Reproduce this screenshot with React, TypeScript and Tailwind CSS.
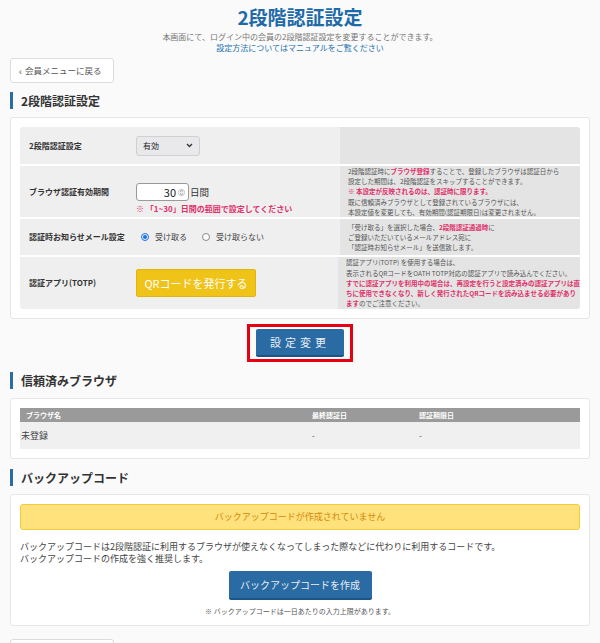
import React from 'react';

const font = { fontFamily: '"Noto Sans CJK JP", "Noto Sans", sans-serif' };

function SectionHeading({ title }: { title: string }) {
  return (
    <div className="flex items-center h-[17px]">
      <div className="w-[3px] h-[17px] bg-[#2a6da5]" />
      <h2 className="ml-[8px] text-[12px] leading-[17px] font-bold text-[#333]">{title}</h2>
    </div>
  );
}

function BackButton() {
  return (
    <div className="flex items-center w-[104px] h-[25px] bg-white border border-[#dcdcdc] rounded-[3px] px-[8px] text-[8.5px] text-[#555] whitespace-nowrap">
      <span className="mr-[3px] text-[10px] leading-none">‹</span>会員メニューに戻る
    </div>
  );
}

function Red({ children }: { children: React.ReactNode }) {
  return <span className="text-[#e0306a] font-bold">{children}</span>;
}

export default function App() {
  return (
    <div style={font} className="w-full min-h-[643px] bg-[#fafafa] px-[10px] pt-[5px] text-[#333]">
      <h1 className="text-center text-[19px] leading-[24px] font-bold text-[#1e6aa8]">2段階認証設定</h1>
      <p className="mt-[2px] text-center text-[8px] leading-[11px] text-[#777]">本画面にて、ログイン中の会員の2段階認証設定を変更することができます。</p>
      <p className="text-center text-[8px] leading-[11px] text-[#2370ae]">設定方法についてはマニュアルをご覧ください</p>

      <div className="mt-[5px]">
        <BackButton />
      </div>

      <div className="mt-[9px]">
        <SectionHeading title="2段階認証設定" />
      </div>

      <div className="mt-[8px] bg-white border border-[#e6e6e6] rounded-[3px] p-[9px]">
        <div className="flex flex-col gap-[2px] rounded-[3px] overflow-hidden">
          <div className="flex h-[37px]">
            <div className="w-[320px] bg-[#efefef] flex items-center">
              <div className="w-[116px] pl-[9px] text-[8px] font-bold text-[#333]">2段階認証設定</div>
              <div className="flex items-center justify-between w-[64px] h-[20px] bg-[#e9e9ec] border border-[#cfcfd4] rounded-[3px] px-[6px] text-[8px] text-[#222]">
                <span>有効</span>
                <svg width="7" height="5" viewBox="0 0 7 5"><path d="M1 1l2.5 2.5L6 1" stroke="#333" strokeWidth="1.3" fill="none" /></svg>
              </div>
            </div>
            <div className="flex-1 bg-[#e4e4e4]" />
          </div>

          <div className="flex h-[51px]">
            <div className="w-[320px] bg-[#efefef] flex">
              <div className="w-[116px] pl-[9px] flex items-center text-[8px] font-bold text-[#333]">ブラウザ認証有効期間</div>
              <div className="pt-[17px]">
                <div className="flex items-center">
                  <div className="flex items-center justify-end w-[53px] h-[18px] bg-white border border-[#9a9a9a] rounded-[3px] pr-[3px]">
                    <span className="text-[11px] leading-none text-[#222]">30</span>
                    <svg className="ml-[2px]" width="7" height="11" viewBox="0 0 7 11">
                      <circle cx="3.5" cy="5.5" r="3.3" fill="#f0f0f0" stroke="#bbb" strokeWidth="0.6" />
                      <path d="M2 4.6l1.5-1.4L5 4.6M2 6.4l1.5 1.4L5 6.4" stroke="#777" strokeWidth="0.7" fill="none" />
                    </svg>
                  </div>
                  <span className="ml-[1px] text-[9.5px] text-[#333]">日間</span>
                </div>
                <div className="mt-[3px] text-[8px] leading-[10px] font-bold text-[#e0306a]">※ 「1~30」日間の範囲で設定してください</div>
              </div>
            </div>
            <div className="flex-1 bg-[#e4e4e4] flex flex-col justify-center pl-[8px] text-[6.5px] leading-[10.2px] text-[#555] whitespace-nowrap">
              <div>2段階認証時に<Red>ブラウザ登録</Red>することで、登録したブラウザは認証日から</div>
              <div>設定した期間は、2段階認証をスキップすることができます。</div>
              <div><Red>※ 本設定が反映されるのは、認証時に限ります。</Red></div>
              <div>既に信頼済みブラウザとして登録されているブラウザには、</div>
              <div>本設定値を変更しても、有効期間(認証期限日)は変更されません。</div>
            </div>
          </div>

          <div className="flex h-[36px]">
            <div className="w-[320px] bg-[#efefef] flex items-center">
              <div className="w-[116px] pl-[9px] text-[8px] font-bold text-[#333]">認証時お知らせメール設定</div>
              <div className="flex items-center text-[8px] text-[#444]">
                <span className="ml-[5px] w-[8px] h-[8px] rounded-full border-[1.5px] border-[#1a73e8] flex items-center justify-center">
                  <span className="w-[3.5px] h-[3.5px] rounded-full bg-[#1a73e8]" />
                </span>
                <span className="ml-[6px]">受け取る</span>
                <span className="ml-[15px] w-[8px] h-[8px] rounded-full border border-[#888] bg-white" />
                <span className="ml-[6px]">受け取らない</span>
              </div>
            </div>
            <div className="flex-1 bg-[#e4e4e4] flex flex-col justify-center pl-[8px] text-[6.5px] leading-[10.2px] text-[#555] whitespace-nowrap">
              <div>「受け取る」を選択した場合、<Red>2段階認証通過時</Red>に</div>
              <div>ご登録いただいているメールアドレス宛に</div>
              <div>「認証時お知らせメール」を送信致します。</div>
            </div>
          </div>

          <div className="flex h-[52px]">
            <div className="w-[320px] bg-[#efefef] flex items-center">
              <div className="w-[116px] pl-[9px] text-[8px] font-bold text-[#333]">認証アプリ(TOTP)</div>
              <div className="flex items-center justify-center w-[120px] h-[28px] bg-[#efc317] border border-[#e3b40c] rounded-[2px] text-[11px] text-white">QRコードを発行する</div>
            </div>
            <div className="flex-1 bg-[#e4e4e4] flex flex-col justify-center pl-[8px] text-[6.5px] leading-[10.2px] text-[#555] whitespace-nowrap">
              <div>認証アプリ(TOTP) を使用する場合は、</div>
              <div>表示されるQRコードをOATH TOTP対応の認証アプリで読み込んでください。</div>
              <div><Red>すでに認証アプリを利用中の場合は、再設定を行うと設定済みの認証アプリは直</Red></div>
              <div><Red>ちに使用できなくなり、新しく発行されたQRコードを読み込ませる必要があり</Red></div>
              <div><Red>ます</Red>のでご注意ください。</div>
            </div>
          </div>
        </div>
      </div>

      <div className="mt-[5px] flex justify-center">
        <div className="border-[3px] border-[#e60012] px-[6px] py-[2px]">
          <div className="flex items-center justify-center w-[88px] h-[28px] bg-[#2a6ba4] border-b-2 border-[#1d5486] rounded-[2px] text-[11px] tracking-[4px] text-[#e8eef5]">
            設定変更
          </div>
        </div>
      </div>

      <div className="mt-[10px]">
        <SectionHeading title="信頼済みブラウザ" />
      </div>

      <div className="mt-[9px] bg-white border border-[#e6e6e6] rounded-[3px] p-[9px]">
        <div className="flex items-center h-[14px] bg-[#9a9a9a] text-[7px] font-bold text-white">
          <div className="w-[292px] pl-[6px]">ブラウザ名</div>
          <div className="w-[107px]">最終認証日</div>
          <div className="flex-1">認証期限日</div>
        </div>
        <div className="flex items-center h-[27px] bg-[#f0f0f0] text-[#444]">
          <div className="w-[292px] pl-[1px] text-[9px]">未登録</div>
          <div className="w-[107px] text-[8px]">-</div>
          <div className="flex-1 text-[8px]">-</div>
        </div>
      </div>

      <div className="mt-[10px]">
        <SectionHeading title="バックアップコード" />
      </div>

      <div className="mt-[8px] bg-white border border-[#e6e6e6] rounded-[3px] p-[9px]">
        <div className="flex items-center justify-center h-[26px] bg-[#ffe27c] border border-[#f3cb3c] rounded-[3px] text-[9px] text-[#d4880e]">
          バックアップコードが作成されていません
        </div>
        <div className="mt-[11px] text-[9px] leading-[12px] text-[#444]">
          <div>バックアップコードは2段階認証に利用するブラウザが使えなくなってしまった際などに代わりに利用するコードです。</div>
          <div>バックアップコードの作成を強く推奨します。</div>
        </div>
        <div className="mt-[6px] flex justify-center">
          <div className="flex items-center justify-center w-[143px] h-[29px] bg-[#2a6ba4] border-b-2 border-[#1d5486] rounded-[2px] text-[10px] text-[#e8eef5]">
            バックアップコードを作成
          </div>
        </div>
        <p className="mt-[6px] text-center text-[7px] leading-[10px] text-[#555]">※ バックアップコードは一日あたりの入力上限があります。</p>
      </div>

      <div className="mt-[13px] pb-[10px]">
        <BackButton />
      </div>
    </div>
  );
}
